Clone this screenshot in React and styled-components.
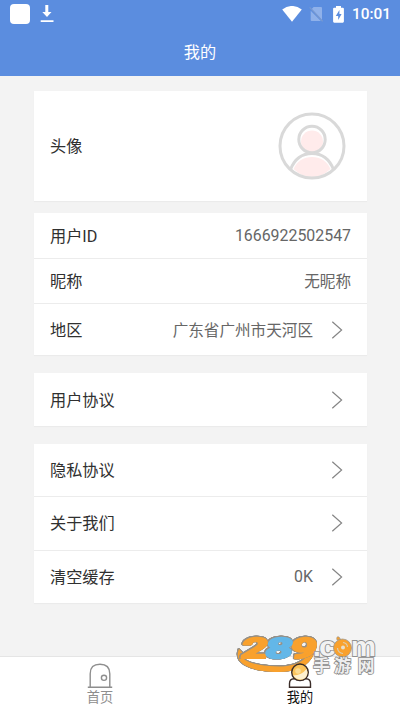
import styled, { createGlobalStyle } from "styled-components";

const GlobalStyle = createGlobalStyle`
  * {
    box-sizing: border-box;
  }
  body {
    margin: 0;
    background: #f3f3f3;
    font-family: Roboto, "Noto Sans CJK SC", sans-serif;
  }
`

const DownloadIcon = () => (
    <svg width="14" height="18" viewBox="0 0 14 18">
        <path d="M5.3 0h3v7h3.2L7 12 2.3 7h3z M.7 15.2h12.8v1.9H.7z" fill="#fff" />
    </svg>
)

const WifiIcon = () => (
    <svg width="20" height="16" viewBox="0 0 20 16">
        <path d="M.2 3.5Q10-3.6 19.8 3.5L10 15.8z" fill="#fff" />
    </svg>
)

const NoSimIcon = () => (
    <svg width="14" height="16" viewBox="0 0 14 16">
        <path d="M4.6 1H12q1 0 1 1v12L2.8 3z M1.7 4.7L11.9 15H2.7q-1 0-1-1z" fill="#8fb1ea" />
        <path d="M.7 1.4L13.6 15.3" stroke="#7899d0" strokeWidth="1.2" />
    </svg>
)

const BatteryIcon = () => (
    <svg width="11" height="17" viewBox="0 0 11 17">
        <path d="M3 0h5v1.7h1.8q1.1 0 1.1 1.1v12.8q0 1.1-1.1 1.1H1.2q-1.1 0-1.1-1.1V2.8q0-1.1 1.1-1.1H3z" fill="#fff" />
        <path d="M6.4 4L2.8 10h2.4v4l3.4-6H6.4z" fill="#5b8ddf" />
    </svg>
)

const Avatar = () => (
    <svg width="68" height="68" viewBox="0 0 68 68">
        <circle cx="34" cy="29.5" r="11" fill="#ffebeb" />
        <path d="M15.5 57Q21 45 34 45T52.500 57Q44 65 34 65T15.500 57z" fill="#ffebeb" />
        <g fill="none" stroke="#d9d9d9" strokeWidth="3">
            <circle cx="34" cy="34" r="32" />
            <circle cx="34" cy="27.500" r="13.200" />
            <path d="M12.500 57.500C17 46 24 41.500 34 41.500S51 46 55.500 57.500" />
        </g>
    </svg>
)

const Arrow = () => (
    <ArrowSvg width="12" height="18" viewBox="0 0 12 18">
        <path d="M1.300 .8L10.600 9 1.300 17.200" fill="none" stroke="#858585" strokeWidth="1.200" />
    </ArrowSvg>
)

const DoorIcon = () => (
    <svg width="26" height="26" viewBox="0 0 26 26">
        <g fill="none" stroke="#8e8e8e" strokeWidth="1.400">
            <path d="M3.200 24V10.800Q3.200 1.200 13 1.200T22.800 10.800V24M.8 24.300h24.400" />
            <circle cx="17" cy="14.800" r="2.600" />
        </g>
    </svg>
)

const UserIcon = () => (
    <UserSvg width="26" height="26" viewBox="0 0 26 26">
        <g stroke="#3a2c28" strokeWidth="1.400">
            <path d="M2.500 24.300V20.500Q2.500 16 7 15.800H19Q23.500 16 23.500 20.500V24.300z" fill="#fff" />
            <circle cx="13" cy="9.300" r="8.300" fill="#fbc45c" />
        </g>
        <path d="M6 12.500Q15 12 19.500 6Q22 12 17.500 15.500Q11 18.500 6 12.500z" fill="#fff1cf" />
        <circle cx="11" cy="8" r="2.800" fill="#fddc94" />
    </UserSvg>
)

const SiteMark = () => (
    <MarkSvg width="148" height="60" viewBox="-2 -8 148 60">
        <Outlined>
            <path d="M3 17C-3 31 13 39 38 40 57 41 72 36 78 22L70 25C63 34 48 35.500 33 34 16 32.500 3 28 7 21z" fill="#f9a12d" />
        </Outlined>
        <Outlined>
            <g transform="translate(0 25.500) skewX(-11)" fontFamily="Roboto, sans-serif" fontWeight="700" fontSize="28" strokeWidth="2.200" strokeLinejoin="round">
                <text x="4" y="0" textLength="26" lengthAdjust="spacingAndGlyphs" fill="#f9a12d" stroke="#f9a12d">2</text>
                <text x="53" y="0" textLength="26" lengthAdjust="spacingAndGlyphs" fill="#f9a12d" stroke="#f9a12d">9</text>
                <text x="28" y="0" textLength="27" lengthAdjust="spacingAndGlyphs" fill="#63b7e8" stroke="#63b7e8">8</text>
            </g>
        </Outlined>
        <g fontFamily="Liberation Sans, sans-serif" fontWeight="bold" fontSize="28" fill="#f2f2f2" stroke="#929292" strokeWidth="1.800" paintOrder="stroke">
            <text x="77" y="24">.</text>
            <text x="83" y="24" textLength="17" lengthAdjust="spacingAndGlyphs">c</text>
            <text x="115" y="24" textLength="25" lengthAdjust="spacingAndGlyphs">m</text>
        </g>
        <path d="M101 8q-1-4 2-3l2 3z" fill="#f9a12d" stroke="#a0988b" strokeWidth=".7" />
        <circle cx="106.500" cy="16" r="9" fill="#f9a12d" stroke="#a0988b" strokeWidth=".8" />
        <circle cx="107" cy="15.500" r="2" fill="#e8e0cf" />
        <path d="M101.500 16A5.500 5.500 0 0 0 107 21.500M111.500 15A5 5 0 0 0 107 10.500" fill="none" stroke="#dccdb0" strokeWidth="1.200" />
        <g fontFamily="Noto Sans CJK SC, sans-serif" fontWeight="bold" fontSize="17" fill="#eee" stroke="#888" strokeWidth="1.500" paintOrder="stroke">
            <text x="77" y="39.500">手</text>
            <text x="98" y="39.500">游</text>
            <text x="121.500" y="39.500">网</text>
        </g>
    </MarkSvg>
)

export default function App() {
    return (
        <Screen>
            <GlobalStyle />
            <Header>
                <StatusBar>
                    <AppSquare />
                    <DownloadIcon />
                    <StatusRight>
                        <WifiIcon />
                        <NoSimIcon />
                        <BatteryIcon />
                        <Clock>10:01</Clock>
                    </StatusRight>
                </StatusBar>
                <Title>我的</Title>
            </Header>

            <Content>
                <Card $gap={12}>
                    <Row $height={110}>
                        <Label>头像</Label>
                        <AvatarBox><Avatar /></AvatarBox>
                    </Row>
                </Card>
                <Card $gap={18}>
                    <Row $height={45}>
                        <Label>用户ID</Label>
                        <Value $number>1666922502547</Value>
                    </Row>
                    <Row $height={45}>
                        <Label>昵称</Label>
                        <Value>无昵称</Value>
                    </Row>
                    <Row $height={52}>
                        <Label>地区</Label>
                        <Value>广东省广州市天河区</Value>
                        <Arrow />
                    </Row>
                </Card>
                <Card $gap={18}>
                    <Row $height={53}>
                        <Label>用户协议</Label>
                        <Arrow />
                    </Row>
                </Card>
                <Card>
                    <Row $height={52}>
                        <Label>隐私协议</Label>
                        <Arrow />
                    </Row>
                    <Row $height={53.5}>
                        <Label>关于我们</Label>
                        <Arrow />
                    </Row>
                    <Row $height={53}>
                        <Label>清空缓存</Label>
                        <Value $number>0K</Value>
                        <Arrow />
                    </Row>
                </Card>
            </Content>

            <TabBar>
                <Tab>
                    <DoorIcon />
                    <span>首页</span>
                </Tab>
                <Tab $active>
                    <UserIcon />
                    <span>我的</span>
                </Tab>
            </TabBar>
            <SiteMark />
        </Screen>
    )
}


const Screen = styled.div`
  position: relative;
  display: flex;
  flex-direction: column;
  width: 400px;
  height: 711px;
  overflow: hidden;
  background: #f3f3f3;
`

const Header = styled.header`
  height: 76px;
  background: #5b8ddf;
  color: #fff;
`

const StatusBar = styled.div`
  display: flex;
  align-items: center;
  height: 28px;
  padding: 0 9px 0 10px;
  gap: 10px;
`

const AppSquare = styled.div`
  width: 20px;
  height: 20px;
  border-radius: 4px;
  background: #fff;
`

const StatusRight = styled.div`
  display: flex;
  align-items: center;
  gap: 7px;
  margin-left: auto;
  svg:nth-child(3) {
    margin-left: 3px;
  }
`

const Clock = styled.span`
  width: 39px;
  margin-left: 1px;
  font-size: 15.4px;
  font-weight: 500;
  line-height: 28px;
  white-space: nowrap;
`

const Title = styled.div`
  font-size: 16.2px;
  line-height: 49px;
  text-align: center;
`

const Content = styled.main`
  flex: 1;
  padding: 15px 33px 0 34px;
`

const Card = styled.section`
  margin-bottom: ${({ $gap }) => $gap || 0}px;
  background: #fff;
  box-shadow: 0 1px 1px #ebebeb;
`

const Row = styled.div`
  display: flex;
  align-items: center;
  height: ${({ $height }) => $height}px;
  padding: 0 16px;
  & + & {
    border-top: 1px solid #ececec;
  }
`

const Label = styled.span`
  margin-right: auto;
  padding-bottom: 2px;
  color: #303030;
  font-size: 16.2px;
`

const Value = styled.span`
  padding-bottom: ${({ $number }) => ($number ? 0 : 2)}px;
  color: #666;
  font-size: ${({ $number }) => ($number ? 15.9 : 15.6)}px;
`

const AvatarBox = styled.div`
  display: flex;
  margin-right: 5px;
`

const ArrowSvg = styled.svg`
  margin: 0 8px 0 18px;
`

const TabBar = styled.nav`
  display: flex;
  height: 55px;
  border-top: 1px solid #e5e5e5;
  background: #fff;
`

const Tab = styled.div`
  display: flex;
  flex: 1;
  flex-direction: column;
  align-items: center;
  padding-top: 6px;
  color: ${({ $active }) => ($active ? '#111' : '#8e8e8e')};
  font-size: 13.2px;
  line-height: 17px;
`

const UserSvg = styled.svg`
  position: relative;
  z-index: 1;
`

const Outlined = styled.g`
  filter: drop-shadow(0.5px 0 0 #969087) drop-shadow(-0.5px 0 0 #969087) drop-shadow(0 0.5px 0 #969087) drop-shadow(0 -0.5px 0 #969087);
`

/* floats over the content and the tab bar */
const MarkSvg = styled.svg`
  position: absolute;
  top: 624px;
  left: 234px;
  overflow: visible;
  pointer-events: none;
`
